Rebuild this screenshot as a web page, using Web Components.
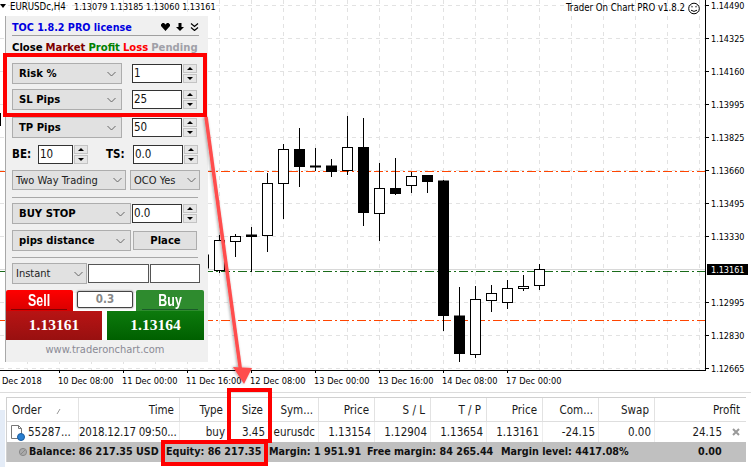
<!DOCTYPE html>
<html>
<head>
<meta charset="utf-8">
<style>
html, body { margin: 0; padding: 0; background: #fff; overflow: hidden; }
body { width: 751px; height: 467px; position: relative; font-family: "DejaVu Sans Condensed", "DejaVu Sans", sans-serif; }
</style>
</head>
<body>
<price-chart></price-chart>
<date-axis></date-axis>
<trade-terminal></trade-terminal>
<toc-panel></toc-panel>
<call-outs></call-outs>

<script>
const FONT = `"DejaVu Sans Condensed", "DejaVu Sans", sans-serif`

// candles: x, wick top, wick bottom, body top, body bottom, black?
const CANDLES = [
    [0, 113, 126, 0, 0, 1],
    [203, 240, 272, 255, 268, 0],
    [219, 235, 273, 240.5, 270.5, 0],
    [235, 234, 257, 236.5, 241.5, 0],
    [251, 227, 272, 235, 236.5, 1],
    [267, 173, 252, 183.5, 235.5, 0],
    [283, 144, 219, 149.5, 183.5, 0],
    [299, 128, 187, 149.5, 166.5, 1],
    [315, 148, 171, 166, 167, 1],
    [331, 159, 177, 166, 171.5, 1],
    [347, 116, 175, 147.5, 170.5, 0],
    [363, 118, 226, 147.5, 212.5, 1],
    [379, 163, 241, 188.5, 213.5, 0],
    [395, 158, 195, 188.5, 193.5, 1],
    [411, 172, 193, 176.5, 185.5, 0],
    [427, 175, 193, 175.5, 181.5, 1],
    [443, 180, 331, 181, 315.5, 1],
    [459, 287, 362, 316, 353.5, 1],
    [475, 286, 358, 299.5, 354.5, 0],
    [491, 285, 312, 293.5, 300.5, 0],
    [507, 280, 309, 288.5, 302.5, 0],
    [523, 275, 291, 286.5, 288.5, 0],
    [539, 264, 290, 269.5, 285.5, 0]
]

const PRICES = ["1.14490", "1.14325", "1.14160", "1.13995", "1.13825", "1.13660",
    "1.13495", "1.13330", "", "1.12995", "1.12830", "1.12665"]

class PriceChart extends HTMLElement {
    constructor() {
        super()
        let grid = ""
        for (let x = 27; x < 705; x += 32) {
            grid += `<line x1="${x + .5}" y1="0" x2="${x + .5}" y2="370" />`
        }
        for (let y = 5; y < 370; y += 33) {
            grid += `<line x1="0" y1="${y + .5}" x2="705" y2="${y + .5}" />`
        }
        const candles = CANDLES.map(([x, t, b, bt, bb, black]) => {
            const body = bb > bt
                ? `<rect x="${x - 5 + .5}" y="${bt}" width="10" height="${bb - bt}" fill="${black ? "#000" : "#fff"}" stroke="#000" />`
                : ""
            return `<line x1="${x + .5}" y1="${t}" x2="${x + .5}" y2="${b}" stroke="#000" />` + body
        }).join("")
        const labels = PRICES.map((p, i) => {
            const y = 5 + i * 33
            return p ? `<line x1="706" y1="${y + .5}" x2="709" y2="${y + .5}" stroke="#000" /><text x="711" y="${y + 4}">${p}</text>` : ""
        }).join("")
        this.attachShadow({ mode: "open" }).innerHTML = `
        <style>
            :host { display: block; height: 371px; }
            svg { display: block; overflow: visible; }
            text { font: 9px ${FONT}; fill: #000; }
            #grid line { stroke: #e2e2e2; stroke-dasharray: 4 4; }
            .lvl { stroke-dasharray: 9 3 2 3; }
            .ver { font-size: 9.6px; }
        </style>
        <svg width="751" height="371" viewBox="0 0 751 371">
            <g id="grid">${grid}</g>
            <line x1="0" y1="269.5" x2="705" y2="269.5" stroke="#d8d8d8" />
            <line class="lvl" x1="0" y1="171.5" x2="705" y2="171.5" stroke="#ff4500" />
            <line class="lvl" x1="0" y1="271.5" x2="705" y2="271.5" stroke="#1a6b1a" />
            <line class="lvl" x1="0" y1="320.5" x2="705" y2="320.5" stroke="#ff4500" />
            ${candles}
            <line x1="705.5" y1="0" x2="705.5" y2="371" stroke="#000" />
            <line x1="0" y1="370.5" x2="706" y2="370.5" stroke="#000" />
            ${labels}
            <rect x="707" y="264" width="41" height="11" fill="#000" />
            <text x="711" y="273" style="fill:#fff">1.13161</text>
            <path d="M0 4h6l-3 4z" fill="#000" />
            <text class="ver" x="10" y="10">EURUSDc,H4</text>
            <text x="74" y="10">1.13079 1.13185 1.13060 1.13161</text>
            <text class="ver" x="566" y="11">Trader On Chart PRO v1.8.2</text>
            <g fill="none" stroke="#000">
                <circle cx="694" cy="8.5" r="5.3" />
                <path d="M691 10.2q3 2.4 6 0" />
                <path d="M692 6v1.4M696 6v1.4" />
            </g>
        </svg>
        `
    }
}
customElements.define("price-chart", PriceChart)

class DateAxis extends HTMLElement {
    constructor() {
        super()
        const dates = ["10 Dec 08:00", "11 Dec 00:00", "11 Dec 16:00", "12 Dec 08:00",
            "13 Dec 00:00", "13 Dec 16:00", "14 Dec 08:00", "17 Dec 00:00"]
        this.attachShadow({ mode: "open" }).innerHTML = `
        <style>
            :host { display: flex; height: 21px; padding-left: 2px; border-bottom: 1px solid #dcdcdc;
                font: 9.2px ${FONT}; color: #000; line-height: 19px; }
            div { width: 64px; white-space: nowrap; }
            .first { width: 56px; }
            .tick::before { content: ""; position: absolute; width: 1px; height: 3px; background: #000; margin: -1px 0 0 1px; }
        </style>
        <div class="first">Dec 2018</div>
        ${dates.map(d => `<div class="tick">${d}</div>`).join("")}
        `
    }
}
customElements.define("date-axis", DateAxis)

class TermRow extends HTMLElement {
    constructor() {
        super()
        this.attachShadow({ mode: "open" }).innerHTML = `
        <style>
            :host {
                display: grid;
                grid-template-columns: 72px 101px 49px 40px 50px repeat(6, 56px) 91px;
                box-sizing: border-box;
                height: var(--h, 20px);
                line-height: var(--h, 20px);
            }
        </style>
        <slot></slot>
        `
    }
}
customElements.define("term-row", TermRow)

class TradeTerminal extends HTMLElement {
    constructor() {
        super()
        const headers = ["Order", "Time", "Type", "Size", "Sym...", "Price", "S / L", "T / P", "Price", "Com...", "Swap", "Profit"]
        const cells = ["55287...", "2018.12.17 09:50...", "buy", "3.45", "eurusdc", "1.13154", "1.12904", "1.13654", "1.13161", "-24.15", "0.00", "24.15"]
        this.attachShadow({ mode: "open" }).innerHTML = `
        <style>
            :host { display: block; margin-top: 4px; height: 70px; padding-left: 6px; width: 740px;
                font: 11.5px ${FONT}; color: #1a1a1a; position: relative; }
            #box { border-left: 1px solid #d0d0d0; border-top: 1px solid #d0d0d0; }
            .head { --h: 24px; border-bottom: 1px solid #dedede; }
            .row { --h: 20px; }
            span { display: block; text-align: right; padding-right: 5px; border-right: 1px solid #e2e2e2; white-space: nowrap; overflow: hidden; }
            .head span:first-child { text-align: left; padding-left: 5px; position: relative; }
            .row span { padding-right: 3px; border-right-color: #ededed; }
            .row span:first-child { text-align: left; padding-left: 21px; position: relative; overflow: visible; }
            .row span:nth-child(2) { letter-spacing: -.25px; }
            .head span:last-child { border-right: 0; padding-right: 6px; }
            .row span:last-child { border-right: 0; padding-right: 24px; position: relative; }
            #doc { position: absolute; left: 3px; top: 2px; }
            #sort { position: absolute; left: 49px; top: 9px; }
            #x { position: absolute; right: 6px; top: 6px; }
            #status { height: 20px; line-height: 20px; background: #c0c0c0; font-size: 10.7px; color: #111; position: relative; }
            #status b { position: absolute; top: 0; white-space: nowrap; }
            #side { position: absolute; left: 0; top: 13px; width: 5px; height: 57px; background: #e4ecf7; }
        </style>
        <div id="side"></div>
        <div id="box">
            <term-row class="head">
                ${headers.map((h, i) => `<span>${h}${i == 0 ? `<svg id="sort" width="6" height="8"><path d="M1 7L4 2" stroke="#999" fill="none"/></svg>` : ""}</span>`).join("")}
            </term-row>
            <term-row class="row">
                ${cells.map((c, i) => `<span>${i == 0 ? `<svg id="doc" width="16" height="17" viewBox="0 0 16 17">
                    <path d="M1.5 1.5h7l3 3v10h-10z" fill="#fff" stroke="#777"/><path d="M8.5 1.5v3h3" fill="none" stroke="#777"/>
                    <circle cx="11" cy="13" r="3.5" fill="#2a7fd0" stroke="#1b5c9e"/></svg>` : ""}${c}${i == 11 ? `<svg id="x" width="8" height="8"><path d="M1 1L7 7M7 1L1 7" stroke="#999" stroke-width="2" fill="none"/></svg>` : ""}</span>`).join("")}
            </term-row>
            <div id="status">
                <svg style="position:absolute;left:11px;top:5px" width="10" height="10"><circle cx="5" cy="5" r="3.6" fill="#aaa" stroke="#888"/><path d="M3 7L7 3" stroke="#888"/></svg>
                <b style="left:22px">Balance: 86 217.35 USD</b>
                <b style="left:159px">Equity: 86 217.35</b>
                <b style="left:262px">Margin: 1 951.91</b>
                <b style="left:360px">Free margin: 84 265.44</b>
                <b style="left:494px">Margin level: 4417.08%</b>
                <b style="left:691px">0.00</b>
            </div>
        </div>
        `
    }
}
customElements.define("trade-terminal", TradeTerminal)

// 下拉框
class TocCombo extends HTMLElement {
    constructor() {
        super()
        this.attachShadow({ mode: "open" }).innerHTML = `
        <style>
            :host { display: flex; align-items: center; justify-content: space-between; box-sizing: border-box;
                height: var(--h, 21px); background: #e1e1e1; border: 1px solid #adadad; padding: 0 5px 0 6px; font-weight: bold; font-size: 11.2px; color: #000; }
            :host([plain]) { font-weight: normal; padding-left: 3px; padding-right: 3px; color: #222; font-size: 11px; }
            :host([btn]) { justify-content: center; }
            :host([btn]) svg { display: none; }
            svg { flex: none; }
        </style>
        <span><slot></slot></span>
        <svg width="9" height="6"><path d="M.5 1L4.5 5L8.5 1" fill="none" stroke="#666"/></svg>
        `
    }
}
customElements.define("toc-combo", TocCombo)

// 数字输入 + 上下按钮
class TocSpin extends HTMLElement {
    constructor() {
        super()
        this.attachShadow({ mode: "open" }).innerHTML = `
        <style>
            :host { display: flex; height: 19px; width: var(--w, 65px); }
            #v { flex: 1; box-sizing: border-box; border: 1px solid #333; background: #fff; padding-left: 1px; line-height: 17px; color: #111; }
            #s { width: 14px; margin-left: 1px; display: flex; flex-direction: column; gap: 1px; }
            #s div { flex: 1; background: #e6e6e6; border: 1px solid #c4c4c4; display: flex; align-items: center; justify-content: center; }
            #s i { width: 0; height: 0; border: 3px solid transparent; }
            #u { border-bottom-color: #000 !important; border-top-width: 0 !important; }
            #d { border-top-color: #000 !important; border-bottom-width: 0 !important; }
        </style>
        <div id="v"><slot></slot></div>
        <div id="s"><div><i id="u"></i></div><div><i id="d"></i></div></div>
        `
    }
}
customElements.define("toc-spin", TocSpin)

class TocPanel extends HTMLElement {
    constructor() {
        super()
        this.attachShadow({ mode: "open" }).innerHTML = `
        <style>
            :host { position: absolute; left: 5px; top: 16px; width: 203px; height: 346px; box-sizing: border-box;
                background: #f0f0f0; border-left: 1px solid #a8a8a8; padding: 3px 8px 0 6px; display: flex; flex-direction: column;
                font: bold 11.5px ${FONT}; color: #000; }
            #title { display: flex; justify-content: space-between; align-items: center; height: 16px; width: 187px; border-bottom: 1px solid #a0a0a0; color: #0000e0; font-size: 10.7px; }
            #title svg { display: block; }
            #tabs { display: flex; gap: 3px; margin-top: 3px; height: 17px; line-height: 17px; white-space: nowrap; font-size: 11.2px; }
            .row { display: flex; align-items: center; }
            hr { border: 0; border-top: 1px solid #a8a8a8; margin: 0; width: 186px; }
            .norm { font-weight: normal; }
            .in { box-sizing: border-box; height: 19px; border: 1px solid #555; background: #fff; }
            #trade { position: relative; margin: 6px -4px 0 -6px; display: flex; flex-direction: column; height: 50px; background: #fff; color: #fff; }
            #top, #bot { display: flex; justify-content: space-between; }
            #top { height: 21px; background: linear-gradient(#f0f0f0 0 3px, #fff 3px); }
            #bot { height: 29px; }
            #sell, #buy { font: bold 17px "Liberation Sans", sans-serif; text-align: center; line-height: 21px; position: relative; }
            #sell span, #buy span { display: inline-block; transform: scaleX(.73); }
            #sell { width: 67px; background: linear-gradient(#ff0000, #d80000); border-radius: 2px 2px 0 0; }
            #buy { width: 68px; background: #2e8b2e; margin-left: auto; border-radius: 2px 2px 0 0; }
            #sell::after { content: ""; position: absolute; left: 5px; right: 6px; bottom: 1px; height: 1px; background: #800000; }
            #buy::after { content: ""; position: absolute; left: 6px; right: 6px; bottom: 1px; height: 1px; background: #1a5a2a; }
            #lot { position: absolute; left: 71px; top: 1px; width: 56px; height: 17px; box-sizing: border-box; background: #fff; border: 1px solid #444; box-shadow: 0 0 2px #666; border-radius: 2px;
                text-align: center; line-height: 15px; color: #888; }
            .px { font: bold 15.5px "Liberation Serif", serif; text-align: center; line-height: 27px; }
            #pl { width: 96px; background: linear-gradient(#b81414, #981010); }
            #pr { width: 97px; background: linear-gradient(#0d7a0d, #006000); }
            #foot { height: 21px; line-height: 20px; text-align: center; font-weight: normal; font-size: 11px; color: #8a8a95; margin: 0 -8px 0 -6px; width: 198px; }
        </style>
        <div id="title">
            <span>TOC 1.8.2 PRO license</span>
            <span style="display:flex;gap:6px;align-items:center">
                <svg width="9" height="8" viewBox="0 0 9 8"><path d="M4.5 8L0 3V1.5L1.5 0H3L4.5 1.5L6 0H7.5L9 1.5V3z" fill="#000"/></svg>
                <svg width="8" height="8" viewBox="0 0 8 8"><path d="M2.5 0h3v4H8L4 8L0 4h2.5z" fill="#000"/></svg>
                <svg width="9" height="8" viewBox="0 0 9 8"><path d="M1 .5L4.500 3.500L8 .5M1 4.500L4.500 7.500L8 4.500" fill="none" stroke="#000" stroke-width="1.200"/></svg>
            </span>
        </div>
        <div id="tabs">
            <span>Close</span><span style="color:#800000">Market</span><span style="color:#008000">Profit</span><span style="color:#f00">Loss</span><span style="color:#a0a0a8">Pending</span>
        </div>
        <div class="row" style="margin-top:7px"><toc-combo style="width:110px">Risk %</toc-combo><toc-spin class="norm" style="margin-left:10px">1</toc-spin></div>
        <div class="row" style="margin-top:5px"><toc-combo style="width:110px">SL Pips</toc-combo><toc-spin class="norm" style="margin-left:10px">25</toc-spin></div>
        <div class="row" style="margin-top:7px"><toc-combo style="width:110px">TP Pips</toc-combo><toc-spin class="norm" style="margin-left:10px">50</toc-spin></div>
        <div class="row" style="margin-top:6px;height:20px"><span style="width:26px">BE:</span><toc-spin class="norm" style="--w:50px">10</toc-spin><span style="margin-left:18px;width:27px">TS:</span><toc-spin class="norm">0.0</toc-spin></div>
        <div class="row" style="margin-top:6px"><toc-combo plain style="width:114px;--h:20px">Two Way Trading</toc-combo><toc-combo plain style="width:70px;margin-left:4px;--h:20px">OCO Yes</toc-combo></div>
        <hr style="margin-top:7px">
        <div class="row" style="margin-top:5px"><toc-combo style="width:119px">BUY STOP</toc-combo><toc-spin class="norm" style="margin-left:1px">0.0</toc-spin></div>
        <div class="row" style="margin-top:6px"><toc-combo style="width:119px">pips distance</toc-combo><toc-combo btn style="width:64px;margin-left:2px;--h:19px">Place</toc-combo></div>
        <hr style="margin-top:6px">
        <div class="row" style="margin-top:5px"><toc-combo plain style="width:75px">Instant</toc-combo><div class="in" style="width:61px;margin-left:1px"></div><div class="in" style="width:50px;margin-left:1px"></div></div>
        <div id="trade">
            <div id="top"><div id="sell"><span>Sell</span></div><div id="buy"><span>Buy</span></div></div>
            <div id="bot"><div id="pl" class="px">1.13161</div><div id="pr" class="px">1.13164</div></div>
            <div id="lot">0.3</div>
        </div>
        <div id="foot">www.traderonchart.com</div>
        `
    }
}
customElements.define("toc-panel", TocPanel)

// 红框和箭头，盖在最上面
class CallOuts extends HTMLElement {
    constructor() {
        super()
        this.attachShadow({ mode: "open" }).innerHTML = `
        <style>
            :host { position: absolute; left: 0; top: 0; width: 751px; height: 467px; pointer-events: none; }
            svg { display: block; }
        </style>
        <svg width="751" height="467">
            <defs><filter id="s" x="-50%" y="-10%" width="200%" height="120%"><feGaussianBlur in="SourceAlpha" stdDeviation="1.500"/><feOffset dx="-1" dy="0"/>
                <feComponentTransfer><feFuncA type="linear" slope=".35"/></feComponentTransfer><feMerge><feMergeNode/><feMergeNode in="SourceGraphic"/></feMerge></filter></defs>
            <g filter="url(#s)">
                <path d="M206 117L240.500 370" stroke="#ff4d4d" stroke-width="3.500" fill="none"/>
                <path d="M233 367L252 368L244 384z" fill="#ff4d4d"/>
            </g>
            <g fill="none" stroke="#f00" stroke-width="4">
                <rect x="5" y="55" width="200" height="60"/>
                <rect x="229" y="390" width="41" height="51"/>
                <rect x="163" y="442" width="103" height="22"/>
            </g>
        </svg>
        `
    }
}
customElements.define("call-outs", CallOuts)
</script>
</body>
</html>
